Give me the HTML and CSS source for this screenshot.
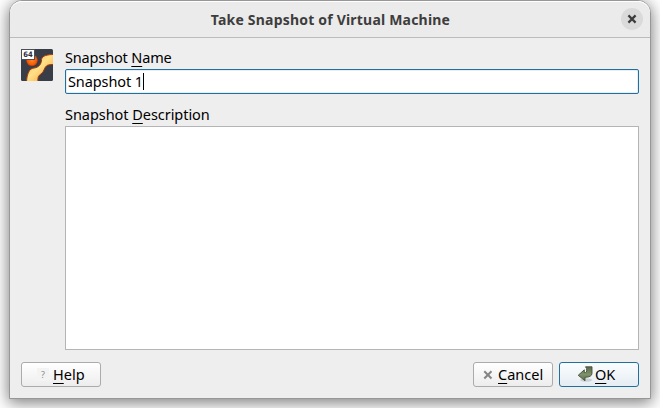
FILE: index.html
```html
<!DOCTYPE html>
<html lang="en">
<head>
<meta charset="utf-8">
<title>Take Snapshot of Virtual Machine</title>
<link rel="stylesheet" href="styles.css">
</head>
<body>
<main class="window">
  <header class="titlebar">
    <h1 class="title">Take Snapshot of Virtual Machine</h1>
    <span class="close">
      <svg width="22" height="22" viewBox="0 0 22 22"><path d="M7.400 7.400l7.200 7.200M14.600 7.400l-7.200 7.200" stroke="#3d3d3d" stroke-width="2.200"/></svg>
    </span>
  </header>
  <section class="content">
    <svg class="os-icon" width="32" height="32" viewBox="0 0 32 32">
      <defs>
        <linearGradient id="band" x1="0" y1="0" x2="1" y2="1"><stop offset="0" stop-color="#ff9d25"/><stop offset=".45" stop-color="#ffe08a"/><stop offset="1" stop-color="#f79a22"/></linearGradient>
        <radialGradient id="ball" cx=".5" cy=".5" r=".55"><stop offset="0" stop-color="#ff8a1c"/><stop offset=".7" stop-color="#f45a08"/><stop offset="1" stop-color="#a82a06"/></radialGradient>
        <clipPath id="tile"><rect width="32" height="32" rx="1.500"/></clipPath>
      </defs>
      <g clip-path="url(#tile)">
        <rect width="32" height="32" fill="#383d48"/>
        <circle cx="11" cy="11.300" r="5.800" fill="url(#ball)"/>
        <path d="M33 5.500C27 5.500 21 6.500 20.500 10.500C20.500 15 18 18.500 13 19C8 19.500 6 25 5.500 33H17C16.500 28 17.500 26.500 20 25C23.500 22.500 23 18.500 26 16.500C28 15.500 30 15.500 33 15.500Z" fill="url(#band)" stroke="#a6380c" stroke-width="1"/>
      </g>
      <rect x=".5" y=".5" width="13" height="10" fill="#fff" stroke="#4b4e56"/>
      <text class="badge" x="2.300" y="8" textLength="9.500" lengthAdjust="spacingAndGlyphs">64</text>
    </svg>
    <div class="fields">
      <label class="label name-label">Snapshot <u>N</u>ame</label>
      <div class="name-input"><span class="value">Snapshot 1</span><i class="caret"></i></div>
      <label class="label desc-label">Snapshot <u>D</u>escription</label>
      <div class="desc-input"></div>
    </div>
  </section>
  <footer class="buttons">
    <div class="button help"><span class="help-icon">?</span><span class="text"><u>H</u>elp</span></div>
    <div class="button cancel">
      <svg width="10" height="10" viewBox="0 0 10 10"><path d="M1.300 1.300l7.200 7.200M8.500 1.300l-7.200 7.200" stroke="#858585" stroke-width="2"/></svg>
      <span class="text"><u>C</u>ancel</span>
    </div>
    <div class="button ok">
      <svg width="18" height="17" viewBox="0 0 18 17">
        <defs><linearGradient id="arrow" x1="0" y1="0" x2="0" y2="1"><stop offset="0" stop-color="#5b6b4c"/><stop offset=".55" stop-color="#7f9168"/><stop offset="1" stop-color="#596a4b"/></linearGradient></defs>
        <ellipse cx="9" cy="14" rx="6" ry="1.800" fill="#000" opacity=".13"/>
        <path d="M8.500 .8H15V7.500Q14.500 11.300 8 11.300V14.800L1.200 9.300L7.300 3.800V6.500H8.500Q9.800 6.500 9.600 4.500V2.500Z" fill="url(#arrow)" stroke="#46513c" stroke-width=".9"/>
      </svg>
      <span class="text"><u>O</u>K</span>
    </div>
  </footer>
</main>
</body>
</html>
```
FILE: styles.css
```css
* { box-sizing: border-box; }
body {
  margin: 0;
  height: 408px;
  overflow: hidden;
  background: #fff;
  color: #000;
  font: 14.5px/20px "Noto Sans", sans-serif;
}
.window {
  display: flex;
  flex-direction: column;
  width: 642px;
  height: 399px;
  margin-left: 9px;
  border: 1px solid #979797;
  border-radius: 13px 13px 0 0;
  background: #eee;
  box-shadow: 0 3px 15px 1px rgba(0, 0, 0, .5);
}
.titlebar {
  display: grid;
  grid-template-columns: 30px 1fr 29px;
  align-items: center;
  flex: none;
  height: 37px;
  border-bottom: 1px solid #bcbcbc;
  border-radius: 12px 12px 0 0;
  background: #ebebeb;
  box-shadow: inset 0 1px #fff;
}
.title {
  grid-column: 2;
  margin: 2px 0 0;
  color: #3d3d3d;
  font-size: 14px;
  line-height: 20px;
  letter-spacing: .2px;
  text-align: center;
  white-space: nowrap;
}
.close {
  width: 22px;
  height: 22px;
  border-radius: 50%;
  background: #dadada;
}
.close svg { display: block; }
.content {
  display: flex;
  flex: none;
  gap: 12px;
  padding: 11px 11px 0;
}
.os-icon { flex: none; }
.badge { font: bold 7.5px "DejaVu Sans", sans-serif; fill: #282c38; }
.fields { flex: 1; }
.label { display: block; height: 20px; line-height: 18px; white-space: nowrap; }
.name-label { line-height: 17px; letter-spacing: -.15px; }
.desc-label { margin-top: 11px; height: 21px; letter-spacing: -.05px; }
u {
  text-decoration: underline;
  text-decoration-thickness: 1px;
  text-underline-offset: 3px;
}
.name-input {
  display: flex;
  align-items: center;
  height: 25px;
  padding-left: 2px;
  border: 1px solid #1f6f9f;
  border-radius: 2px;
  background: #fff;
  box-shadow: inset 0 0 0 1px #e5eff5;
}
.value { padding-bottom: 2px; letter-spacing: -.1px; }
.caret { width: 1px; height: 17px; background: #000; }
.desc-input { height: 224px; border: 1px solid #b5b5b5; background: #fff; }
.buttons {
  display: flex;
  gap: 6px;
  padding: 12px 11px 0;
}
.button {
  display: flex;
  align-items: center;
  width: 80px;
  height: 25px;
  border: 1px solid #ababab;
  border-radius: 3px;
  background: linear-gradient(#fff, #ededed);
  white-space: nowrap;
}
.text { padding-bottom: 2px; }
.help { margin-right: auto; padding-left: 15px; gap: 4px; }
.help-icon {
  width: 12px;
  height: 13px;
  background: #f3f3f3;
  color: #8b8b8b;
  font-size: 9px;
  line-height: 13px;
  text-align: center;
}
.cancel { padding-left: 9px; gap: 5px; }
.ok {
  padding-left: 17px;
  border-color: #1f6f9f;
  background: linear-gradient(#fbfdfe, #e5edf3);
}
```
